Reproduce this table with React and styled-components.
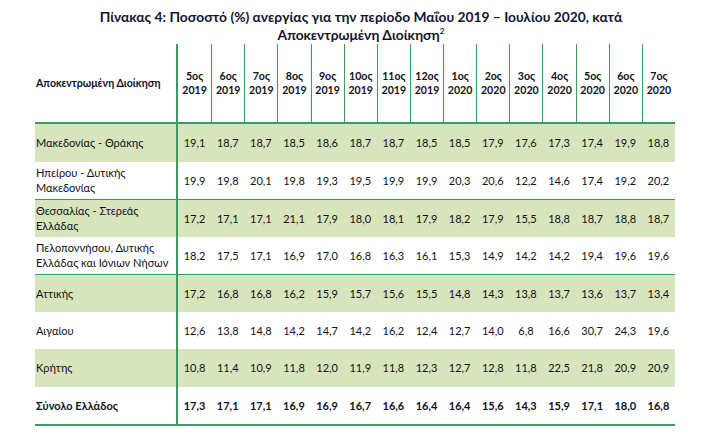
import styled, { createGlobalStyle } from "styled-components";

const GREEN = "#3d9a62";
const FILL = "#d8e4bc";

const GlobalStyle = createGlobalStyle`
  body {
    margin: 0;
    background: #ffffff;
    font-family: Lato, "Noto Sans", "Open Sans", sans-serif;
    color: #111118;
  }
`;

const Page = styled.div`
  width: 706px;
  height: 442px;
  padding-top: 8px;
  box-sizing: border-box;
`;

const Title = styled.div`
  padding-left: 16px;
  text-align: center;
  font-size: 13.8px;
  font-weight: 700;
  line-height: 18px;
  color: #14142a;
`;

const Sup = styled.sup`
  font-size: 8px;
  line-height: 0;
  vertical-align: 6px;
`;

const Table = styled.div`
  width: 640px;
  margin-left: 35px;
  border-bottom: 2px solid ${GREEN};
`;

const Row = styled.div`
  display: grid;
  grid-template-columns: 143px repeat(15, 1fr);
  box-sizing: border-box;
  height: ${(p) => (p.$head ? "80px" : "37.5px")};
  background: ${(p) => (p.$shaded ? FILL : "#ffffff")};
  border-top: ${(p) => (p.$ruled ? `1px solid ${GREEN}` : "none")};
  border-bottom: ${(p) => (p.$head ? `2px solid ${GREEN}` : "none")};
  font-weight: ${(p) => (p.$bold ? 700 : 400)};
`;

const Label = styled.div`
  display: flex;
  align-items: center;
  padding-left: 1px;
  border-right: 2px solid ${GREEN};
  font-size: ${(p) => (p.$head ? "10.6px" : "11px")};
  font-weight: ${(p) => (p.$head ? 700 : "inherit")};
  line-height: 15px;
`;

const HeadCell = styled.div`
  display: flex;
  flex-direction: column;
  align-items: center;
  justify-content: center;
  border-left: ${(p) => (p.$first ? "none" : `1px solid ${GREEN}`)};
  font-size: 10.6px;
  font-weight: 700;
  line-height: 14px;
`;

const Cell = styled.div`
  display: flex;
  align-items: center;
  justify-content: center;
  font-size: 11px;
`;

const periods = [
  ["5ος", "2019"],
  ["6ος", "2019"],
  ["7ος", "2019"],
  ["8ος", "2019"],
  ["9ος", "2019"],
  ["10ος", "2019"],
  ["11ος", "2019"],
  ["12ος", "2019"],
  ["1ος", "2020"],
  ["2ος", "2020"],
  ["3ος", "2020"],
  ["4ος", "2020"],
  ["5ος", "2020"],
  ["6ος", "2020"],
  ["7ος", "2020"],
];

const rows = [
  {
    name: ["Μακεδονίας - Θράκης"],
    shaded: true,
    values: "19,1 18,7 18,7 18,5 18,6 18,7 18,7 18,5 18,5 17,9 17,6 17,3 17,4 19,9 18,8",
  },
  {
    name: ["Ηπείρου - Δυτικής", "Μακεδονίας"],
    values: "19,9 19,8 20,1 19,8 19,3 19,5 19,9 19,9 20,3 20,6 12,2 14,6 17,4 19,2 20,2",
  },
  {
    name: ["Θεσσαλίας - Στερεάς", "Ελλάδας"],
    shaded: true,
    ruled: true,
    values: "17,2 17,1 17,1 21,1 17,9 18,0 18,1 17,9 18,2 17,9 15,5 18,8 18,7 18,8 18,7",
  },
  {
    name: ["Πελοποννήσου, Δυτικής", "Ελλάδας και Ιόνιων Νήσων"],
    values: "18,2 17,5 17,1 16,9 17,0 16,8 16,3 16,1 15,3 14,9 14,2 14,2 19,4 19,6 19,6",
  },
  {
    name: ["Αττικής"],
    shaded: true,
    ruled: true,
    values: "17,2 16,8 16,8 16,2 15,9 15,7 15,6 15,5 14,8 14,3 13,8 13,7 13,6 13,7 13,4",
  },
  {
    name: ["Αιγαίου"],
    values: "12,6 13,8 14,8 14,2 14,7 14,2 16,2 12,4 12,7 14,0 6,8 16,6 30,7 24,3 19,6",
  },
  {
    name: ["Κρήτης"],
    shaded: true,
    values: "10,8 11,4 10,9 11,8 12,0 11,9 11,8 12,3 12,7 12,8 11,8 22,5 21,8 20,9 20,9",
  },
  {
    name: ["Σύνολο Ελλάδος"],
    bold: true,
    values: "17,3 17,1 17,1 16,9 16,9 16,7 16,6 16,4 16,4 15,6 14,3 15,9 17,1 18,0 16,8",
  },
];

function App() {
  return (
    <Page>
      <GlobalStyle />
      <Title>
        <div>
          Πίνακας 4: Ποσοστό (%) ανεργίας για την περίοδο Μαΐου 2019 – Ιουλίου
          2020, κατά
        </div>
        <div>
          Αποκεντρωμένη Διοίκηση<Sup>2</Sup>
        </div>
      </Title>
      <Table>
        <Row $head>
          <Label $head>Αποκεντρωμένη Διοίκηση</Label>
          {periods.map(([m, y], i) => (
            <HeadCell key={i} $first={i === 0}>
              <span>{m}</span>
              <span>{y}</span>
            </HeadCell>
          ))}
        </Row>
        {rows.map((r, i) => (
          <Row key={i} $shaded={r.shaded} $ruled={r.ruled} $bold={r.bold}>
            <Label>
              <div>
                {r.name.map((l, j) => (
                  <div key={j}>{l}</div>
                ))}
              </div>
            </Label>
            {r.values.split(" ").map((v, j) => (
              <Cell key={j}>{v}</Cell>
            ))}
          </Row>
        ))}
      </Table>
    </Page>
  );
}

export default App;
